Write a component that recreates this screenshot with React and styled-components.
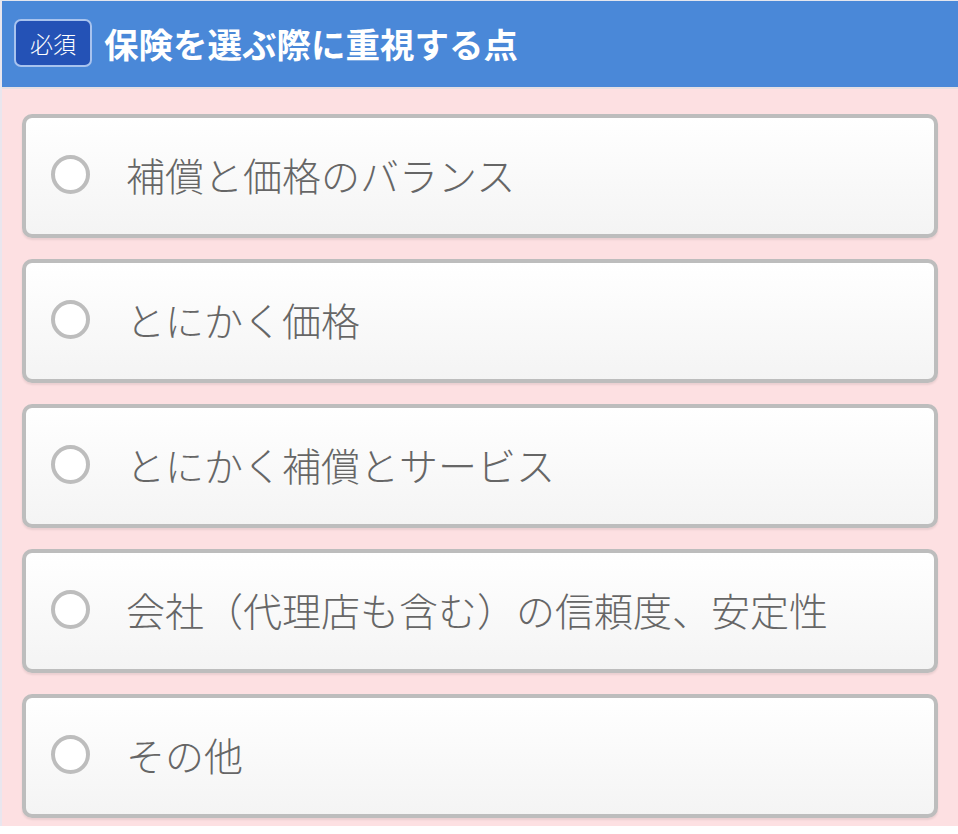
import React from 'react';
import styled, { createGlobalStyle } from 'styled-components';

const GlobalStyle = createGlobalStyle`
  html, body {
    margin: 0;
    padding: 0;
    background: #fff;
  }
  body {
    font-family: "Noto Sans CJK JP", "Noto Sans", sans-serif;
  }
`;

const Page = styled.div`
  width: 958px;
  border-top: 1px solid #e4e6ee;
  border-left: 2px solid #e9e6ee;
  box-sizing: border-box;
`;

const QuestionHeader = styled.header`
  height: 86px;
  padding: 0 12px;
  display: flex;
  align-items: center;
  gap: 12px;
  background-color: #4a88d8;
  border-bottom: 2px solid #e6dfe3;
`;

const RequiredBadge = styled.span`
  width: 78px;
  height: 48px;
  box-sizing: border-box;
  display: flex;
  align-items: center;
  justify-content: center;
  color: #fff;
  font-size: 23px;
  font-weight: 300;
  background-color: #2452b6;
  border: 2px solid #a8c3ee;
  border-radius: 7px;
  margin-top: -2px;
`;

const QuestionTitle = styled.h1`
  margin: 0 0 2px;
  color: #fff;
  font-size: 34.5px;
  font-weight: 700;
`;

const OptionList = styled.div`
  padding: 25px 20px 8px;
  display: flex;
  flex-direction: column;
  gap: 21px;
  background-color: #fde0e2;
`;

const OptionCard = styled.label`
  height: 124px;
  box-sizing: border-box;
  padding: 0 0 0 25px;
  display: flex;
  align-items: center;
  gap: 36px;
  background: linear-gradient(#ffffff, #f4f4f4);
  border: 4px solid #bdbdbd;
  border-radius: 10px;
  box-shadow: 0 2px 2px rgba(0, 0, 0, 0.08);
  cursor: pointer;
`;

const RadioCircle = styled.span`
  width: 39px;
  height: 39px;
  box-sizing: border-box;
  flex-shrink: 0;
  background-color: #fff;
  border: 4px solid #bdbdbd;
  border-radius: 50%;
  margin-top: -3px;
`;

const OptionText = styled.span`
  color: #666;
  font-size: 39px;
  font-weight: 300;
  line-height: 1;
  margin-top: -4px;
`;

const options = [
  '補償と価格のバランス',
  'とにかく価格',
  'とにかく補償とサービス',
  '会社（代理店も含む）の信頼度、安定性',
  'その他',
];

export default function App() {
  return (
    <Page>
      <GlobalStyle />
      <QuestionHeader>
        <RequiredBadge>必須</RequiredBadge>
        <QuestionTitle>保険を選ぶ際に重視する点</QuestionTitle>
      </QuestionHeader>
      <OptionList>
        {options.map((text) => (
          <OptionCard key={text}>
            <RadioCircle />
            <OptionText>{text}</OptionText>
          </OptionCard>
        ))}
      </OptionList>
    </Page>
  );
}
